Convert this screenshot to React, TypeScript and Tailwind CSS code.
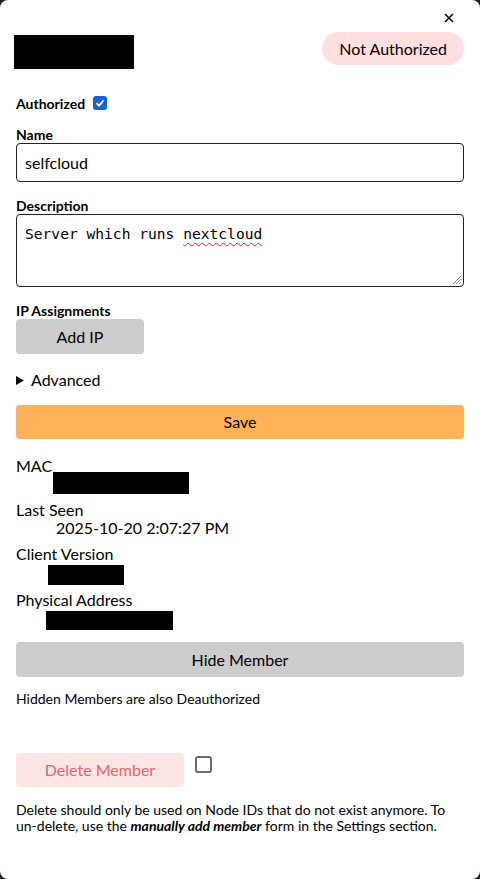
const font = "font-['Lato','Noto_Sans',sans-serif]";

function Redacted({ className }: { className: string }) {
  return <div className={`bg-black ${className}`} aria-hidden="true" />;
}

function Detail({
  label,
  children,
  className = "mb-[8px]",
}: {
  label: string;
  children: React.ReactNode;
  className?: string;
}) {
  return (
    <div className={className}>
      <dt className="h-[18px] text-[16px] leading-[18px]">{label}</dt>
      <dd className="flex h-[18px] items-start text-[16px] leading-[18px]">{children}</dd>
    </div>
  );
}

export default function App() {
  return (
    <div className={`h-[879px] w-[480px] bg-[#1c1c1c] ${font} text-black`}>
      <div className="flex h-full flex-col rounded-[8px] bg-white px-4 pt-[8px]">
        <div className="flex h-[20px] justify-end">
          <button className="mr-[10px] flex h-[20px] w-[10px] items-center justify-center">
            <svg width="10" height="10" viewBox="0 0 10 10">
              <path d="M1 1 L9 9 M9 1 L1 9" stroke="#000" strokeWidth="1.6" />
            </svg>
          </button>
        </div>

        <div className="mt-[4px] flex items-start justify-between">
          <Redacted className="ml-[-2px] mt-[3px] h-[34px] w-[120px]" />
          <span className="flex h-[33px] items-center rounded-full bg-[#ffdfdf] px-[17px] text-[16px]">
            Not Authorized
          </span>
        </div>

        <label className="mt-[26px] flex h-[16px] items-center gap-[8px] text-[14px] font-bold">
          Authorized
          <span className="flex h-[14px] w-[14px] items-center justify-center rounded-[3px] bg-[#1463d8]">
            <svg width="10" height="10" viewBox="0 0 10 10">
              <path d="M1.5 5.2 L4 7.6 L8.6 2.4" fill="none" stroke="#fff" strokeWidth="1.8" />
            </svg>
          </span>
        </label>

        <div className="mt-[16px] h-[16px] text-[14px] font-bold leading-[16px]">Name</div>
        <input
          readOnly
          defaultValue="selfcloud"
          className="h-[39px] w-full rounded-[4px] border border-[#222] px-[8px] text-[16px] outline-none"
        />

        <div className="mt-[16px] h-[16px] text-[14px] font-bold leading-[16px]">Description</div>
        <div className="relative h-[73px] w-full rounded-[4px] border border-[#222] px-[8px] pt-[10px] font-['DejaVu_Sans_Mono',monospace] text-[14.6px] leading-[18px]">
          Server which runs{" "}
          <span className="underline decoration-[#e02020] decoration-wavy decoration-1 underline-offset-[3px]">
            nextcloud
          </span>
          <svg className="absolute bottom-[1px] right-[1px]" width="12" height="12" viewBox="0 0 12 12">
            <path d="M11 3 L3 11 M11 6 L6 11 M11 9 L9 11" stroke="#8a8a8a" strokeWidth="1" />
          </svg>
        </div>

        <div className="mt-[16px] h-[16px] text-[14px] font-bold leading-[16px]">IP Assignments</div>
        <button className="h-[35px] w-[128px] rounded-[4px] bg-[#cccccc] text-[16px]">Add IP</button>

        <div className="mt-[15px] flex h-[22px] items-center gap-[7px] text-[16px]">
          <svg width="8" height="9" viewBox="0 0 8 9">
            <path d="M0 0 L8 4.5 L0 9 Z" fill="#000" />
          </svg>
          Advanced
        </div>

        <button className="mt-[14px] h-[34px] w-full rounded-[4px] bg-[#ffb257] text-[16px]">Save</button>

        <dl className="mt-[18px]">
          <Detail label="MAC">
            <Redacted className="ml-[37px] mt-[-3px] h-[22px] w-[136px]" />
          </Detail>
          <Detail label="Last Seen">
            <span className="ml-[40px]">2025-10-20 2:07:27 PM</span>
          </Detail>
          <Detail label="Client Version" className="mb-[10px]">
            <Redacted className="ml-[32px] mt-[2px] h-[20px] w-[76px]" />
          </Detail>
          <Detail label="Physical Address">
            <Redacted className="ml-[30px] mt-[2px] h-[19px] w-[127px]" />
          </Detail>
        </dl>

        <button className="mt-[7px] h-[35px] w-full rounded-[4px] bg-[#cccccc] text-[16px]">Hide Member</button>

        <p className="mt-[14px] h-[16px] text-[14px] leading-[16px]">Hidden Members are also Deauthorized</p>

        <div className="mt-[46px] flex items-start gap-[11px]">
          <button className="h-[34px] w-[168px] rounded-[4px] bg-[#ffe6e6] text-[16px] text-[#e8636b]">
            Delete Member
          </button>
          <span className="mt-[3px] h-[17px] w-[17px] rounded-[3px] border-2 border-[#6b6b6b]" />
        </div>

        <p className="mt-[15px] text-[14px] leading-[16px]">
          Delete should only be used on Node IDs that do not exist anymore. To{" "}
          <span className="whitespace-nowrap">un-delete,</span> use the{" "}
          <b className="italic">manually add member</b> form in the Settings section.
        </p>
      </div>
    </div>
  );
}
